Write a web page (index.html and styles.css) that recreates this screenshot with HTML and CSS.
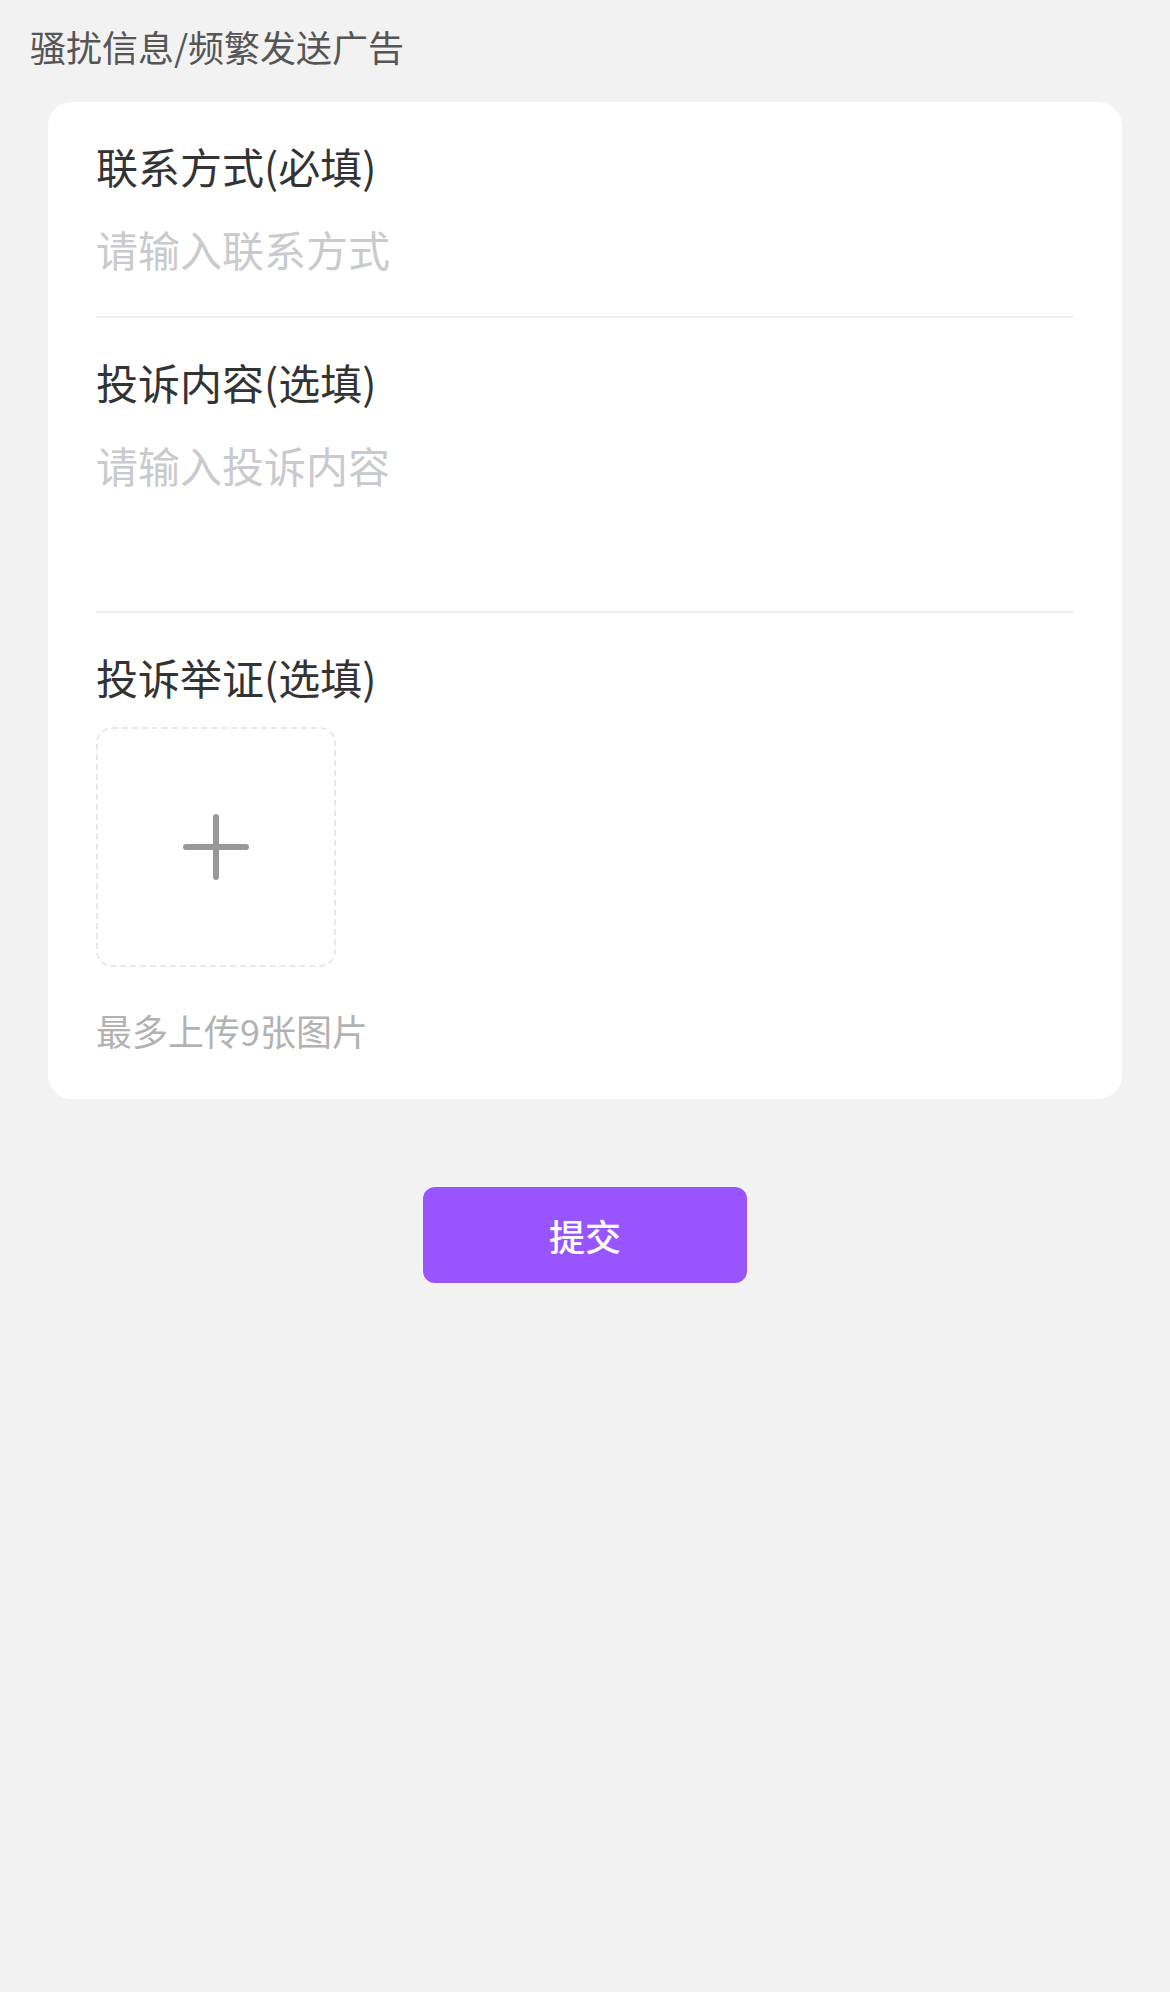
FILE: index.html
```html
<!DOCTYPE html>
<html lang="zh-CN">
<head>
<meta charset="utf-8">
<title>投诉</title>
<link rel="stylesheet" href="styles.css">
</head>
<body>
<div class="page">
  <div class="reason">骚扰信息/频繁发送广告</div>
  <div class="card">
    <div class="field">
      <div class="label">联系方式(必填)</div>
      <input class="input" type="text" placeholder="请输入联系方式">
    </div>
    <div class="field">
      <div class="label">投诉内容(选填)</div>
      <textarea class="textarea" placeholder="请输入投诉内容"></textarea>
    </div>
    <div class="field last">
      <div class="label">投诉举证(选填)</div>
      <div class="upload">
        <svg class="plus" width="68" height="68" viewBox="0 0 68 68">
          <path d="M34 4V64M4 34H64" stroke="#999999" stroke-width="6" stroke-linecap="round" fill="none"/>
        </svg>
      </div>
      <div class="hint">最多上传9张图片</div>
    </div>
  </div>
  <div class="actions">
    <button class="submit" type="button">提交</button>
  </div>
</div>
</body>
</html>
```
FILE: styles.css
```css
html, body {
  margin: 0;
  padding: 0;
  background: #f2f2f2;
}
body {
  font-family: "Noto Sans CJK SC", "Noto Sans", sans-serif;
  width: 1170px;
  min-height: 1992px;
}
.page {
  display: flex;
  flex-direction: column;
}
.reason {
  padding: 21px 30px 0;
  font-size: 36px;
  line-height: 50px;
  color: #555555;
}
.card {
  margin: 31px 48px 0;
  background: #ffffff;
  border-radius: 24px;
  padding: 0 48px 44px;
  display: flex;
  flex-direction: column;
}
.field {
  padding: 34px 0 37px;
  border-bottom: 2px solid #efefef;
  display: flex;
  flex-direction: column;
}
.field.last {
  border-bottom: none;
  padding-bottom: 0;
}
.label {
  font-size: 42px;
  line-height: 60px;
  color: #333333;
}
.input,
.textarea {
  font-family: inherit;
  font-size: 42px;
  line-height: 60px;
  color: #333333;
  border: none;
  outline: none;
  padding: 0;
  margin: 23px 0 0;
  background: transparent;
  width: 100%;
}
.input {
  height: 60px;
}
.textarea {
  height: 139px;
  resize: none;
  display: block;
}
.input::placeholder,
.textarea::placeholder {
  color: #c9cacd;
}
.upload {
  margin-top: 20px;
  width: 240px;
  height: 240px;
  box-sizing: border-box;
  border: 2px dashed #e8e8e8;
  border-radius: 16px;
  display: flex;
  align-items: center;
  justify-content: center;
}
.hint {
  margin-top: 38px;
  font-size: 36px;
  line-height: 50px;
  color: #b2b2b2;
}
.actions {
  display: flex;
  justify-content: center;
  margin-top: 88px;
}
.submit {
  width: 324px;
  height: 96px;
  border: none;
  border-radius: 12px;
  background: #9854ff;
  color: #ffffff;
  font-family: inherit;
  font-size: 36px;
  font-weight: 500;
  padding: 0;
}
```
